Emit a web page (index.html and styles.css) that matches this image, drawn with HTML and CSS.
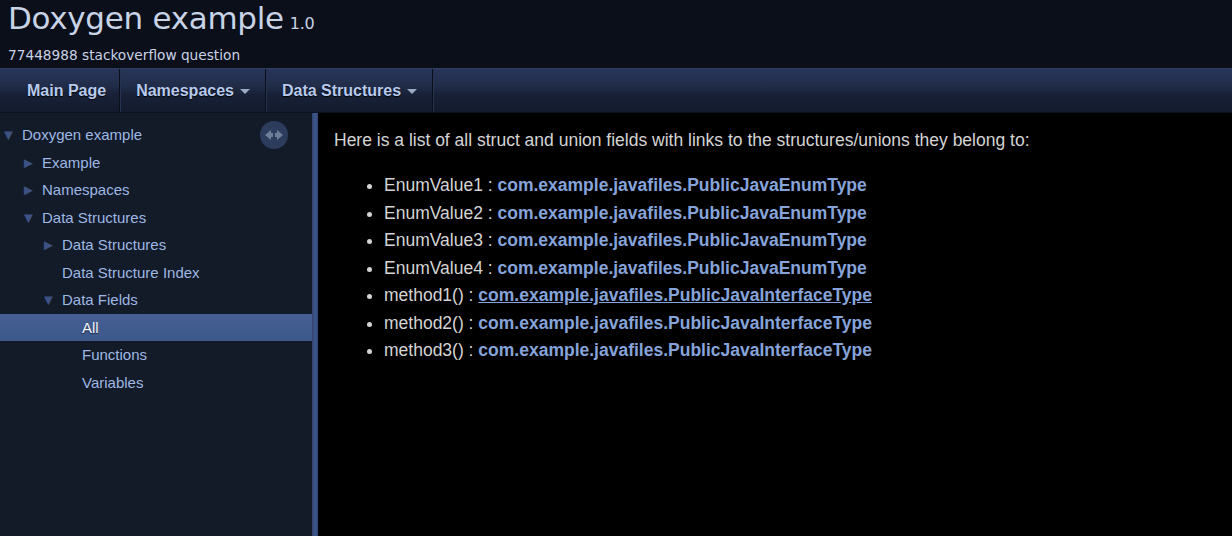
FILE: index.html
```html
<!DOCTYPE html>
<html>
<head>
<meta charset="utf-8">
<link rel="stylesheet" href="styles.css">
</head>
<body>
<div class="top">
  <div class="titlearea">
    <div class="projectname">Doxygen example<span class="projectnumber">1.0</span></div>
    <div class="projectbrief">77448988 stackoverflow question</div>
  </div>
  <nav class="menubar">
    <a class="mitem first">Main Page</a>
    <a class="mitem">Namespaces<span class="caret"></span></a>
    <a class="mitem">Data Structures<span class="caret"></span></a>
  </nav>
</div>
<div class="body">
  <aside class="sidenav">
    <div class="navtree">
      <div class="row l0"><span class="arrow">&#9660;</span><span class="label">Doxygen example</span></div>
      <div class="row l1"><span class="arrow">&#9658;</span><span class="label">Example</span></div>
      <div class="row l1"><span class="arrow">&#9658;</span><span class="label">Namespaces</span></div>
      <div class="row l1"><span class="arrow">&#9660;</span><span class="label">Data Structures</span></div>
      <div class="row l2"><span class="arrow">&#9658;</span><span class="label">Data Structures</span></div>
      <div class="row l2"><span class="arrow"></span><span class="label">Data Structure Index</span></div>
      <div class="row l2"><span class="arrow">&#9660;</span><span class="label">Data Fields</span></div>
      <div class="row l3 selected"><span class="arrow"></span><span class="label">All</span></div>
      <div class="row l3"><span class="arrow"></span><span class="label">Functions</span></div>
      <div class="row l3"><span class="arrow"></span><span class="label">Variables</span></div>
    </div>
    <div class="sync">
      <svg width="28" height="28" viewBox="0 0 28 28">
        <circle cx="14" cy="14" r="14" fill="#2c3c5c"/>
        <path d="M5 14 L11 9 L11 12 L13 12 L13 16 L11 16 L11 19 Z" fill="#6f7e98"/>
        <path d="M23 14 L17 9 L17 12 L15 12 L15 16 L17 16 L17 19 Z" fill="#6f7e98"/>
      </svg>
    </div>
  </aside>
  <div class="splitbar"></div>
  <main class="content">
    <p class="intro">Here is a list of all struct and union fields with links to the structures/unions they belong to:</p>
    <ul class="fields">
      <li>EnumValue1 : <a class="el">com.example.javafiles.PublicJavaEnumType</a></li>
      <li>EnumValue2 : <a class="el">com.example.javafiles.PublicJavaEnumType</a></li>
      <li>EnumValue3 : <a class="el">com.example.javafiles.PublicJavaEnumType</a></li>
      <li>EnumValue4 : <a class="el">com.example.javafiles.PublicJavaEnumType</a></li>
      <li>method1() : <a class="el hover">com.example.javafiles.PublicJavaInterfaceType</a></li>
      <li>method2() : <a class="el">com.example.javafiles.PublicJavaInterfaceType</a></li>
      <li>method3() : <a class="el">com.example.javafiles.PublicJavaInterfaceType</a></li>
    </ul>
  </main>
</div>
</body>
</html>
```

FILE: styles.css
```css
html, body {
  margin: 0;
  padding: 0;
  height: 100%;
  background: #000;
  font-family: "Liberation Sans", Arial, sans-serif;
  overflow: hidden;
}
body {
  display: flex;
  flex-direction: column;
}
.top {
  background: #0b0f1a;
}
.titlearea {
  height: 68px;
  box-sizing: border-box;
  padding: 0 0 0 8px;
  color: #c9d3e6;
}
.projectname {
  font-family: "DejaVu Sans", sans-serif;
  font-size: 31px;
  line-height: 36px;
  letter-spacing: -0.3px;
}
.projectnumber {
  font-size: 16px;
  margin-left: 6px;
}
.projectbrief {
  font-family: "DejaVu Sans", sans-serif;
  font-size: 13.7px;
  line-height: 18px;
  margin-top: 4px;
}
.menubar {
  display: flex;
  height: 45px;
  box-sizing: border-box;
  padding-left: 10px;
  border-top: 1px solid #2f3e60;
  border-bottom: 1px solid #0d1220;
  background: linear-gradient(to bottom, #28365a 0%, #202c48 40%, #172036 60%, #131b2d 100%);
}
.mitem {
  display: flex;
  align-items: center;
  padding: 0 15px 0 16px;
  font-weight: bold;
  font-size: 16px;
  color: #b8cbee;
  text-shadow: 0 1px 1px #000;
  border-right: 1px solid #0b0f1a;
  box-shadow: 1px 0 0 #263350;
}
.mitem.first {
  margin-left: -10px;
  padding-left: 27px;
  padding-right: 13px;
}
.caret {
  display: inline-block;
  margin-left: 6px;
  margin-top: 2px;
  width: 0;
  height: 0;
  border-left: 5px solid transparent;
  border-right: 5px solid transparent;
  border-top: 5px solid #9aa9c4;
}
.body {
  flex: 1;
  display: flex;
  min-height: 0;
}
.sidenav {
  position: relative;
  width: 312px;
  flex: none;
  background: #131a28;
  padding-top: 8px;
  box-sizing: border-box;
}
.row {
  display: flex;
  align-items: center;
  height: 27.5px;
  font-size: 15px;
  color: #9db8e4;
}
.row .arrow {
  width: 22px;
  font-size: 15px;
  line-height: 1;
  color: #3c5282;
  text-align: left;
  padding-left: 1px;
  box-sizing: border-box;
}
.row.l1 { padding-left: 20px; }
.row.l2 { padding-left: 40px; }
.row.l3 { padding-left: 60px; }
.row.selected {
  background: linear-gradient(to bottom, #455f94 0%, #3c5789 100%);
  color: #f2f5fc;
  text-shadow: 0 1px 1px #1a2440;
}
.sync {
  position: absolute;
  top: 8px;
  left: 260px;
  width: 28px;
  height: 28px;
}
.splitbar {
  width: 6px;
  flex: none;
  background: linear-gradient(to right, #2e4272 0%, #3e5688 45%, #354b7c 100%);
}
.content {
  flex: 1;
  padding: 12px 16px;
  color: #d4d4d4;
  font-size: 17.5px;
}
.intro {
  margin: 0;
  line-height: 30px;
}
.fields {
  margin: 17px 0 0;
  padding-left: 50px;
  list-style: disc;
}
.fields li {
  line-height: 27.5px;
}
.el {
  color: #86a4da;
  font-weight: bold;
  text-decoration: none;
}
.el.hover {
  text-decoration: underline;
}
```
